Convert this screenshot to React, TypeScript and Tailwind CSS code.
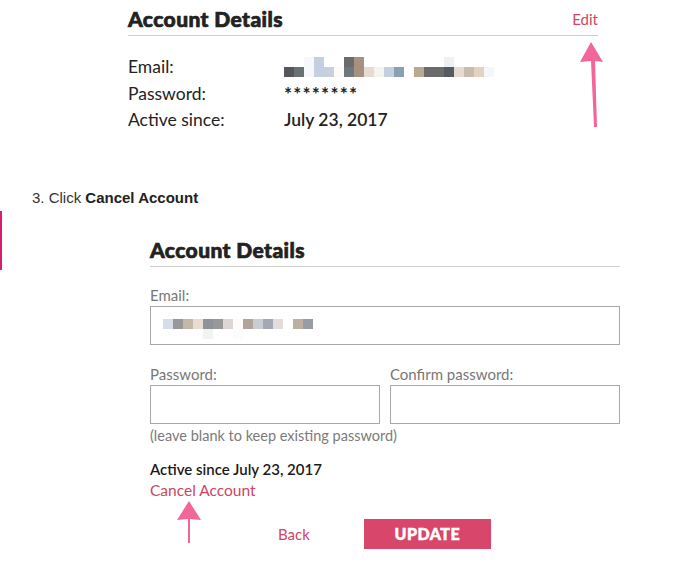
import React from "react";

// pixelated (redacted) email, one entry per 10px column: [upper, lower]
const topEmail: [string, string][] = [
  ["", "bg-[#55575c]"],
  ["", "bg-[#6b7073]"],
  ["bg-[#f7f8fc]", "bg-[#f7f8fc]"],
  ["bg-[#c4d0e2]", "bg-[#c4d0e2]"],
  ["", "bg-[#c8cfdd]"],
  ["", "bg-[#fbfaf5]"],
  ["bg-[#6b6b6b]", "bg-[#6f777e]"],
  ["bg-[#a89080]", "bg-[#a89080]"],
  ["", "bg-[#e6dbd0]"],
  ["", "bg-[#f3f3ef]"],
  ["", "bg-[#c4d0e2]"],
  ["", "bg-[#8aa0b2]"],
  ["", ""],
  ["", "bg-[#b8a894]"],
  ["", "bg-[#6b6b6b]"],
  ["", "bg-[#6b6b6b]"],
  ["bg-[#eef1f4]", "bg-[#555a63]"],
  ["", "bg-[#e6dbd0]"],
  ["", "bg-[#c8bcb0]"],
  ["", "bg-[#e2d2c2]"],
  ["", "bg-[#f5f6fc]"],
];

const formEmail: [string, string][] = [
  ["bg-[#d6dce8]", ""],
  ["bg-[#999898]", ""],
  ["bg-[#c4b8aa]", ""],
  ["bg-[#e8ddd2]", ""],
  ["bg-[#8f9399]", "bg-[#f3f4f2]"],
  ["bg-[#999898]", ""],
  ["bg-[#dcd6d4]", ""],
  ["bg-[#fefcf8]", "bg-[#fbfbfb]"],
  ["bg-[#b0a49c]", ""],
  ["bg-[#c8ccd4]", ""],
  ["bg-[#a4a8b4]", ""],
  ["bg-[#e2dcda]", ""],
  ["", ""],
  ["bg-[#bbb0a4]", ""],
  ["bg-[#999ca2]", ""],
];

const Pixels = ({ cols }: { cols: [string, string][] }) => (
  <div className="flex">
    {cols.map(([up, down], i) => (
      <div key={i} className="flex flex-col w-[10px]">
        <div className={`h-[10px] ${up}`} />
        <div className={`h-[10px] ${down}`} />
      </div>
    ))}
  </div>
);

const Arrow = ({ className, d }: { className: string; d: string }) => (
  <svg className={`absolute ${className}`} width="40" height="100" viewBox="0 0 40 100">
    <path d={d} fill="#f2669a" />
  </svg>
);

const Heading = ({ children }: { children: React.ReactNode }) => (
  <h2 className="text-[21px] leading-[24px] font-black text-[#222] tracking-[0.4px] [-webkit-text-stroke:0.7px_#222]">
    {children}
  </h2>
);

export default function App() {
  return (
    <div
      className="relative w-[676px] h-[563px] bg-white overflow-hidden text-[#222]"
      style={{ fontFamily: "Lato, 'Noto Sans', sans-serif" }}
    >
      {/* Step 2 screenshot */}
      <div className="ml-[128px] w-[470px]">
        <div className="flex justify-between items-start pt-[7px] pb-[4px] border-b border-[#cfcfcf]">
          <Heading>Account Details</Heading>
          <span className="mt-[3px] text-[15px] leading-[18px] text-[#d0455f]">Edit</span>
        </div>
        <div className="mt-[18px] grid grid-cols-[156px_1fr] text-[17.5px] leading-[26.5px]">
          <span>Email:</span>
          <div className="pt-[2.5px] h-[26.5px]">
            <Pixels cols={topEmail} />
          </div>
          <span>Password:</span>
          <span className="font-bold text-[19px] tracking-[1.2px]">********</span>
          <span>Active since:</span>
          <span className="font-semibold">July 23, 2017</span>
        </div>
      </div>

      <p
        className="ml-[32px] mt-[54px] text-[15px] leading-[20px] text-[#333]"
        style={{ fontFamily: "'Liberation Sans', Arial, sans-serif" }}
      >
        3. Click <b className="text-[#222]">Cancel Account</b>
      </p>

      <div className="absolute left-0 top-[211px] w-[2px] h-[59px] bg-[#d81f6f]" />

      {/* Step 3 screenshot */}
      <div className="ml-[150px] w-[470px] mt-[30px]">
        <div className="pb-[4px] border-b border-[#cfcfcf]">
          <Heading>Account Details</Heading>
        </div>
        <label className="block mt-[19px] text-[15px] leading-[18px] text-[#777]">Email:</label>
        <div className="mt-[2.5px] h-[39px] border border-[#a8a8a8] pt-[12px] pl-[12px]">
          <Pixels cols={formEmail} />
        </div>
        <div className="mt-[20px] grid grid-cols-2 gap-x-[10px] text-[15px] leading-[18px] text-[#777]">
          <label>Password:</label>
          <label>Confirm password:</label>
          <div className="mt-[1.5px] h-[39px] border border-[#a8a8a8]" />
          <div className="mt-[1.5px] h-[39px] border border-[#a8a8a8]" />
        </div>
        <p className="mt-[3.5px] text-[14.5px] leading-[18px] text-[#7a7a7a]">
          (leave blank to keep existing password)
        </p>
        <p className="mt-[15px] text-[15px] leading-[18px] font-semibold text-[#1a1a1a]">
          Active since July 23, 2017
        </p>
        <p className="mt-[3px] text-[15.5px] leading-[18px] text-[#d0455f]">Cancel Account</p>
        <div className="mt-[19.5px] flex items-center pl-[128px] gap-[54px]">
          <span className="text-[15px] leading-[18px] text-[#d0455f]">Back</span>
          <button className="w-[127px] h-[30px] bg-[#d9466b] text-white text-[16px] font-black tracking-[0.5px] [-webkit-text-stroke:0.5px_#fff]">
            UPDATE
          </button>
        </div>
      </div>

      <Arrow className="left-[572px] top-[40px]" d="M19 2 L8 22 L19 21 L22 87 L25 87 L23 21 L31 22 Z" />
      <Arrow className="left-[169px] top-[499px]" d="M20 2 L8 21 L19 20 L19 44 L21 44 L21 20 L32 21 Z" />
    </div>
  );
}
